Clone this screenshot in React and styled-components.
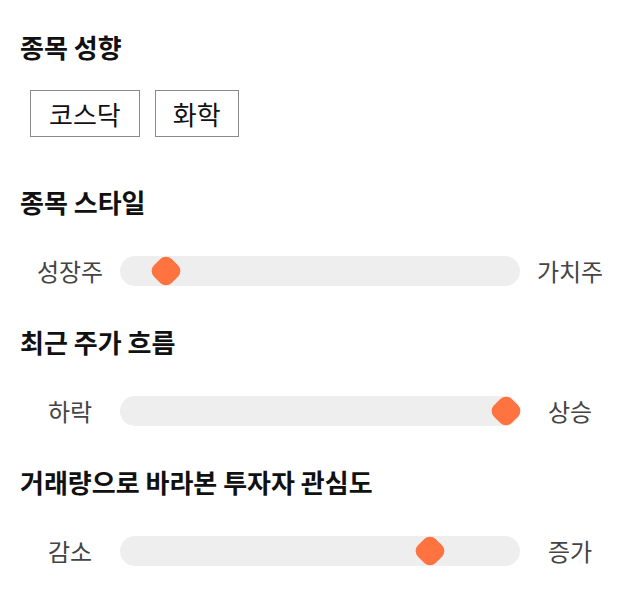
import React from "react";
import styled, { createGlobalStyle } from "styled-components";

const Global = createGlobalStyle`
  html, body { margin: 0; padding: 0; background: #ffffff; }
  body { font-family: "Noto Sans CJK KR", "Noto Sans", sans-serif; }
`;

const Page = styled.div`
  width: 640px;
  padding: 32px 20px 0;
  box-sizing: border-box;
`;

const Section = styled.section`
  display: flex;
  flex-direction: column;
  margin-bottom: ${(p) => p.$gap || 41}px;
`;

const Heading = styled.h2`
  margin: 0;
  font-size: 26px;
  line-height: 30px;
  font-weight: 700;
  color: #111;
`;

const Chips = styled.div`
  display: flex;
  gap: 15px;
  margin: 28px 0 0 10px;
`;

const Chip = styled.button`
  height: 47px;
  padding: 0 ${(p) => p.$pad || 18}px;
  border: 1px solid #8a8a8a;
  background: #fff;
  font-family: inherit;
  font-size: 26px;
  color: #111;
  line-height: 1;
  cursor: pointer;
`;

const Row = styled.div`
  display: flex;
  align-items: center;
  height: 30px;
  margin-top: 39px;
`;

const Label = styled.span`
  width: 100px;
  flex: none;
  text-align: center;
  font-size: 24px;
  color: #444;
  line-height: 30px;
`;

const Track = styled.div`
  position: relative;
  flex: 1;
  height: 30px;
  border-radius: 15px;
  background: #eeeeee;
`;

const Thumb = styled.div`
  position: absolute;
  top: 50%;
  width: 25px;
  height: 25px;
  border-radius: 8px;
  background: #ff7340;
  transform: translate(-50%, -50%) rotate(45deg);
`;

const Slider = ({ left, right, value }) => (
  <Row>
    <Label>{left}</Label>
    <Track>
      <Thumb style={{ left: `calc(14px + (100% - 28px) * ${value})` }} />
    </Track>
    <Label>{right}</Label>
  </Row>
);

export default function App() {
  return (
    <Page>
      <Global />
      <Section $gap={50}>
        <Heading>종목 성향</Heading>
        <Chips>
          <Chip>코스닥</Chip>
          <Chip $pad={17}>화학</Chip>
        </Chips>
      </Section>
      <Section>
        <Heading>종목 스타일</Heading>
        <Slider left="성장주" right="가치주" value={0.085} />
      </Section>
      <Section>
        <Heading>최근 주가 흐름</Heading>
        <Slider left="하락" right="상승" value={1} />
      </Section>
      <Section>
        <Heading>거래량으로 바라본 투자자 관심도</Heading>
        <Slider left="감소" right="증가" value={0.797} />
      </Section>
    </Page>
  );
}
